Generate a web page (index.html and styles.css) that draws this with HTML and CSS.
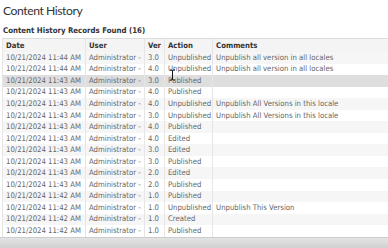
FILE: index.html
```html
<!DOCTYPE html>
<html lang="en">
<head>
    <meta charset="UTF-8">
    <title>Content History</title>
    <link rel="stylesheet" href="styles.css">
</head>
<body>
    <div class="page">
        <h1 class="page-title">Content History</h1>
        <div class="records-count">Content History Records Found (16)</div>
        <table class="history">
            <thead>
                <tr>
                    <th class="col-date">Date</th>
                    <th class="col-user">User</th>
                    <th class="col-ver">Ver</th>
                    <th class="col-action">Action</th>
                    <th>Comments</th>
                </tr>
            </thead>
            <tbody>
                <tr><td>10/21/2024 11:44 AM</td><td>Administrator -</td><td>3.0</td><td>Unpublished</td><td>Unpublish all version in all locales</td></tr>
                <tr><td>10/21/2024 11:44 AM</td><td>Administrator -</td><td>4.0</td><td>Unpublished</td><td>Unpublish all version in all locales</td></tr>
                <tr class="hover"><td>10/21/2024 11:43 AM</td><td>Administrator -</td><td>3.0</td><td>Published</td><td></td></tr>
                <tr><td>10/21/2024 11:43 AM</td><td>Administrator -</td><td>4.0</td><td>Published</td><td></td></tr>
                <tr><td>10/21/2024 11:43 AM</td><td>Administrator -</td><td>4.0</td><td>Unpublished</td><td>Unpublish All Versions in this locale</td></tr>
                <tr><td>10/21/2024 11:43 AM</td><td>Administrator -</td><td>3.0</td><td>Unpublished</td><td>Unpublish All Versions in this locale</td></tr>
                <tr><td>10/21/2024 11:43 AM</td><td>Administrator -</td><td>4.0</td><td>Published</td><td></td></tr>
                <tr><td>10/21/2024 11:43 AM</td><td>Administrator -</td><td>4.0</td><td>Edited</td><td></td></tr>
                <tr><td>10/21/2024 11:43 AM</td><td>Administrator -</td><td>3.0</td><td>Edited</td><td></td></tr>
                <tr><td>10/21/2024 11:43 AM</td><td>Administrator -</td><td>3.0</td><td>Published</td><td></td></tr>
                <tr><td>10/21/2024 11:43 AM</td><td>Administrator -</td><td>2.0</td><td>Edited</td><td></td></tr>
                <tr><td>10/21/2024 11:43 AM</td><td>Administrator -</td><td>2.0</td><td>Published</td><td></td></tr>
                <tr><td>10/21/2024 11:42 AM</td><td>Administrator -</td><td>1.0</td><td>Published</td><td></td></tr>
                <tr><td>10/21/2024 11:42 AM</td><td>Administrator -</td><td>1.0</td><td>Unpublished</td><td>Unpublish This Version</td></tr>
                <tr><td>10/21/2024 11:42 AM</td><td>Administrator -</td><td>1.0</td><td>Created</td><td></td></tr>
                <tr><td>10/21/2024 11:42 AM</td><td>Administrator -</td><td>1.0</td><td>Published</td><td></td></tr>
            </tbody>
        </table>
        <div class="footer-bar"></div>
        <svg class="cursor" width="7" height="12" viewBox="0 0 7 12">
            <path d="M1 1h2l0.5 0.5L4 1h2M3.5 1.5v9M1 11h2l0.5-0.5L4 11h2" fill="none" stroke="#111" stroke-width="1"/>
        </svg>
    </div>
</body>
</html>
```

FILE: styles.css
```css
html, body {
    margin: 0;
    height: 100%;
    overflow: hidden;
    background-color: #fff;
}

.page {
    position: relative;
    padding: 0 0 0 2px;
    font-family: 'DejaVu Sans Condensed', 'DejaVu Sans', sans-serif;
    color: #666;
}

.page-title {
    margin: 0;
    padding: 2px 0 0 1px;
    height: 24px;
    font-family: Lato, sans-serif;
    font-size: 12.2px;
    font-weight: normal;
    letter-spacing: -0.45px;
    color: #333;
    line-height: 18px;
}

.records-count {
    padding-left: 1px;
    height: 12px;
    font-size: 7.8px;
    font-weight: bold;
    color: #333;
    line-height: 10px;
}

.history {
    border-collapse: collapse;
    width: 388px;
    font-size: 7.7px;
}

.history th {
    height: 13px;
    padding: 0 1px 0 3px;
    text-align: left;
    font-weight: bold;
    color: #333;
    background-color: #f4f4f4;
    border-top: 1px solid #ddd;
    border-left: 1px solid #e6e6e6;
}

.history td {
    height: 11.55px;
    padding: 0 1px 0 3px;
    line-height: 10px;
    white-space: nowrap;
    border-left: 1px solid #e6e6e6;
}

.history tbody tr:nth-child(odd) td {
    background-color: #f6f6f6;
}

.history tbody tr.hover td {
    background-color: #dedede;
}

.col-date { width: 78px; }
.col-user { width: 54px; }
.col-ver { width: 15px; }
.col-action { width: 43px; }

.footer-bar {
    height: 14px;
    margin-left: -2px;
    border-top: 1px solid #ccc;
    background: linear-gradient(#e4e4e4, #c9c9c9);
}

.cursor {
    position: absolute;
    left: 169px;
    top: 69px;
}
```
